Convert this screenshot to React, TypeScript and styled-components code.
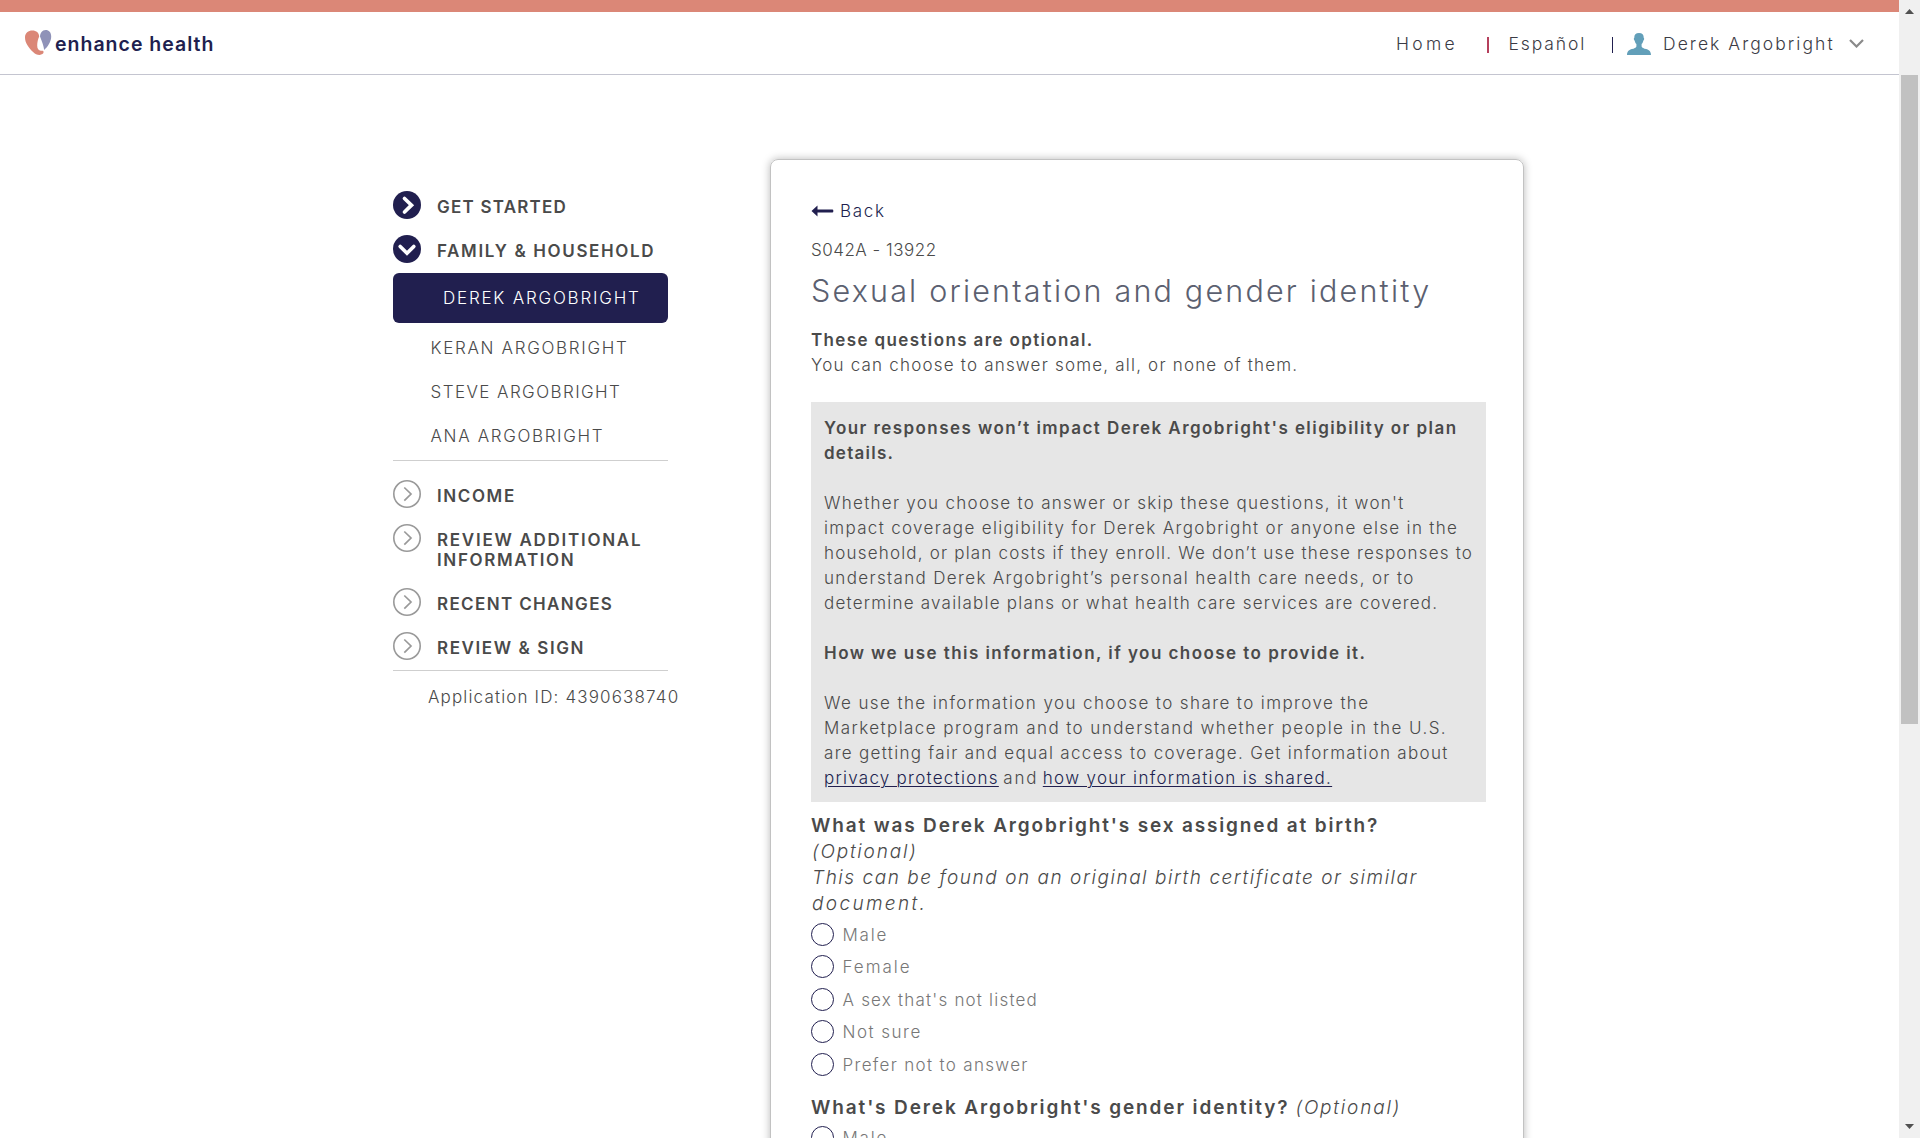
import React from "react";
import styled, { createGlobalStyle } from "styled-components";

const navy = "#211f4f";
const ink = "#4a4a4a";

const GlobalStyle = createGlobalStyle`
  *, *::before, *::after { box-sizing: border-box; }
  html, body { margin: 0; height: 1138px; overflow: hidden; background: #fff; }
  body { font-family: Inter, "Noto Sans", sans-serif; font-weight: 300; font-size: 17px; color: ${ink}; }
`;

const Window = styled.div`
  display: flex;
  height: 1138px;
  overflow: hidden;
`;
const Page = styled.div`
  display: flex;
  flex-direction: column;
  width: 1899px;
`;
const TopBand = styled.div`
  flex: none;
  height: 12px;
  background: #db8777;
`;
const Header = styled.header`
  flex: none;
  display: flex;
  justify-content: space-between;
  height: 63px;
  padding: 0 35px 0 24px;
  border-bottom: 1px solid #c4c5d0;
`;
const Tracked = styled.span<{ $track: number }>`
  letter-spacing: ${(p) => p.$track}px;
  white-space: nowrap;
`;
const Logo = styled.div`
  display: flex;
  gap: 3px;
  height: 63px;
  padding-top: 17px;
`;
const LogoText = styled(Tracked)`
  font-size: 19.5px;
  font-weight: 600;
  line-height: 31px;
  color: ${navy};
`;
const Nav = styled.nav`
  display: flex;
  height: 63px;
  align-items: center;
  font-size: 17.5px;
  color: #3b3b45;
`;
const NavItem = styled(Tracked)<{ $width: number }>`
  width: ${(p) => p.$width}px;
`;
const NavRule = styled.i<{ $color: string; $after: number }>`
  width: 1.5px;
  height: 16px;
  margin: 3px ${(p) => p.$after}px 0 0;
  background: ${(p) => p.$color};
`;
const PersonIcon = styled.svg`
  margin-right: 12px;
`;

const Body = styled.main`
  display: flex;
  align-items: flex-start;
  padding: 84px 0 0 393px;
`;
const Sidebar = styled.aside`
  width: 377px;
  padding-top: 26px;
`;
const Section = styled.div<{ $height?: number }>`
  display: grid;
  grid-template-columns: 28px auto;
  column-gap: 16px;
  align-items: start;
  height: ${(p) => p.$height ?? 44}px;
  padding-top: 6px;
`;
const SectionTitle = styled.div`
  display: flex;
  flex-direction: column;
  padding-top: 6px;
  font-weight: 600;
  line-height: 20px;
`;
const Current = styled.div`
  display: flex;
  align-items: center;
  width: 275px;
  height: 50px;
  margin: 0 0 3px;
  padding-left: 50px;
  border-radius: 6px;
  background: ${navy};
  color: #fff;
`;
const Member = styled.div`
  display: flex;
  align-items: center;
  height: 44px;
  padding-left: 37.5px;
`;
const Divider = styled.div<{ $before?: number; $after: number }>`
  width: 275px;
  height: 1px;
  margin: ${(p) => p.$before ?? 0}px 0 ${(p) => p.$after}px;
  background: #cfcfcf;
`;
const AppId = styled.div`
  padding-left: 35px;
  line-height: 24px;
`;

const Card = styled.section`
  width: 754px;
  height: 1100px;
  padding: 38px 36px 0 40px;
  border: 1px solid #c2c2c2;
  border-radius: 8px;
  box-shadow: 0 0 8px rgba(0, 0, 0, 0.28);
`;
const Back = styled.a`
  display: flex;
  align-items: center;
  gap: 6px;
  height: 25px;
  color: ${navy};
`;
const Code = styled.div`
  margin-top: 15px;
  line-height: 25px;
`;
const Title = styled.h1`
  margin: 8px 0 0;
  font-size: 30.5px;
  font-weight: 300;
  line-height: 40px;
  color: #5b6070;
`;
const Line = styled(Tracked)<{ $bold?: boolean }>`
  display: block;
  line-height: 25px;
  font-weight: ${(p) => (p.$bold ? 600 : 300)};
`;
const Intro = styled.div`
  margin-top: 17px;
`;
const Notice = styled.div`
  width: 675px;
  height: 400px;
  margin: 24px 0 11px;
  padding: 14px 12px 0 13px;
  background: #e6e6e6;
`;
const Paragraph = styled.div`
  margin-bottom: 25px;
`;
const LinkLine = styled.div`
  display: flex;
  gap: 4.5px;
  line-height: 25px;
`;
const TextLink = styled(Tracked)`
  color: ${navy};
  text-decoration: underline;
  text-decoration-thickness: 1px;
  text-underline-offset: 2px;
`;
const Question = styled.div`
  font-size: 19px;
  line-height: 26px;
`;
const Strong = styled(Tracked)`
  font-weight: 600;
`;
const Hint = styled(Tracked)`
  display: block;
  padding-left: 1px;
  font-style: italic;
`;
const InlineHint = styled(Tracked)`
  margin-left: 6px;
  font-style: italic;
`;
const Options = styled.div`
  margin: 1px 0 14px;
`;
const Option = styled.label`
  display: flex;
  align-items: center;
  gap: 8.500px;
  height: 32.5px;
  color: #777;
`;
const OptionText = styled(Tracked)`
  padding-top: 1px;
`;
const Radio = styled.span`
  width: 23px;
  height: 23px;
  border: 1.4px solid ${navy};
  border-radius: 50%;
`;

const Scrollbar = styled.div`
  display: flex;
  flex-direction: column;
  align-items: center;
  width: 21px;
  height: 1138px;
  padding: 9px 0;
  background: #f0f0f0;
`;
const Thumb = styled.div`
  width: 17px;
  height: 649px;
  margin: 61px 0 400px;
  background: #c1c1c1;
`;

function Chevron({ kind }: { kind: "done" | "open" | "todo" }) {
  const filled = kind !== "todo";
  return (
    <svg width="28" height="28" viewBox="0 0 28 28" fill="none">
      <circle cx="14" cy="14" r={filled ? 14 : 13.2} fill={filled ? navy : "none"} stroke={filled ? "none" : "#999"} strokeWidth="1.6" />
      {kind === "done" && <path d="M11.5 7.5 18.5 14.2 11.5 21" stroke="#fff" strokeWidth="3.7" strokeLinecap="round" strokeLinejoin="miter" />}
      {kind === "open" && <path d="M7.2 11.5 14 18.2 20.8 11.5" stroke="#fff" strokeWidth="3.7" strokeLinecap="round" strokeLinejoin="miter" />}
      {kind === "todo" && <path d="M11.3 7.5 18 14 11.3 20.7" stroke="#999" strokeWidth="1.7" />}
    </svg>
  );
}

type TextRow = [string, number];

const members: TextRow[] = [["KERAN ARGOBRIGHT", 1.68], ["STEVE ARGOBRIGHT", 1.42], ["ANA ARGOBRIGHT", 1.64]];
const impact: TextRow[] = [
  ["Whether you choose to answer or skip these questions, it won't", 1.28],
  ["impact coverage eligibility for Derek Argobright or anyone else in the", 1.33],
  ["household, or plan costs if they enroll. We don’t use these responses to", 1.19],
  ["understand Derek Argobright’s personal health care needs, or to", 1.34],
  ["determine available plans or what health care services are covered.", 1.22],
];
const usage: TextRow[] = [
  ["We use the information you choose to share to improve the", 1.4],
  ["Marketplace program and to understand whether people in the U.S.", 1.43],
  ["are getting fair and equal access to coverage. Get information about", 1.31],
];
const sexOptions: TextRow[] = [
  ["Male", 1.8], ["Female", 2.0], ["A sex that's not listed", 1.2], ["Not sure", 1.5], ["Prefer not to answer", 1.32],
];

function Step({ kind, lines, height }: { kind: "done" | "open" | "todo"; lines: TextRow[]; height?: number }) {
  return (
    <Section $height={height}>
      <Chevron kind={kind} />
      <SectionTitle>
        {lines.map(([text, track]) => <Tracked key={text} $track={track}>{text}</Tracked>)}
      </SectionTitle>
    </Section>
  );
}

function RadioGroup({ options }: { options: TextRow[] }) {
  return (
    <Options>
      {options.map(([text, track]) => (
        <Option key={text}><Radio /><OptionText $track={track}>{text}</OptionText></Option>
      ))}
    </Options>
  );
}

export default function App() {
  return (
    <Window>
      <GlobalStyle />
      <Page>
        <TopBand />
        <Header>
          <Logo>
            <svg width="28" height="27" viewBox="0 0 28 27">
              <path d="M1 8.5C1 3.5 4.4 1.4 8.3 1.4c4.1 0 6.7 2.1 6.9 6.1-1.2 2.5-2 5.9-2 9 0 3.4 1.4 5.2 3.6 5.2 1.4 0 2.8-.4 2.8 1.4 0 1.7-1.8 2.8-4 2.8-2.500 0-4.600-1.100-6.800-3.200C4.600 18.600 1 14 1 8.500Z" fill="#db8777" />
              <path d="M16 7.600c.3-3.500 2-6.600 5.700-6.600 3.200 0 5.500 2.300 5.500 6.500 0 5-3.200 10.200-7 13.400-.7-4.500-2.300-8.500-4.200-13.300Z" fill="#8f92b8" />
            </svg>
            <LogoText $track={1}>enhance health</LogoText>
          </Logo>
          <Nav>
            <NavItem $track={3.3} $width={91}>Home</NavItem>
            <NavRule $color="#b5405c" $after={20} />
            <NavItem $track={1.9} $width={103}>Español</NavItem>
            <NavRule $color={navy} $after={14} />
            <PersonIcon width="24" height="22" viewBox="0 0 24 22" fill="#629fb9">
              <path d="M12 0c-3.200 0-4.900 2-4.700 4.800-.8.300-.5 2.500.4 3 .3 1.600.9 2.600 1.700 3.300v2.300c-.5 1.500-2.300 1.900-4.500 2.700C2.200 17 .2 17.900 0 22h24c-.2-4.100-2.200-5-4.900-5.900-2.200-.8-4-1.200-4.500-2.700v-2.300c.8-.7 1.400-1.700 1.700-3.300.9-.5 1.200-2.700.4-3C16.900 2 15.200 0 12 0Z" />
            </PersonIcon>
            <NavItem $track={2.05} $width={186}>Derek Argobright</NavItem>
            <svg width="15" height="9" viewBox="0 0 15 9" fill="none">
              <path d="M1 1 7.500 7.500 14 1" stroke="#8a8a8a" strokeWidth="2.2" />
            </svg>
          </Nav>
        </Header>
        <Body>
          <Sidebar>
            <Step kind="done" lines={[["GET STARTED", 1.22]]} />
            <Step kind="open" lines={[["FAMILY & HOUSEHOLD", 1.63]]} />
            <Current><Tracked $track={1.78}>DEREK ARGOBRIGHT</Tracked></Current>
            {members.map(([text, track]) => <Member key={text}><Tracked $track={track}>{text}</Tracked></Member>)}
            <Divider $before={2} $after={13} />
            <Step kind="todo" lines={[["INCOME", 1.6]]} />
            <Step kind="todo" height={64} lines={[["REVIEW ADDITIONAL", 1.73], ["INFORMATION", 1.65]]} />
            <Step kind="todo" lines={[["RECENT CHANGES", 1.36]]} />
            <Step kind="todo" lines={[["REVIEW & SIGN", 1.6]]} />
            <Divider $after={14} />
            <AppId><Tracked $track={1.15}>Application ID: 4390638740</Tracked></AppId>
          </Sidebar>
          <Card>
            <Back>
              <svg width="23" height="12" viewBox="0 0 23 12" fill={navy}>
                <path d="M.5 6 6.500.500V4.600H21.300a1 1 0 0 1 1 1v.800a1 1 0 0 1-1 1H6.500V11.500Z" />
              </svg>
              <Tracked $track={1.7}>Back</Tracked>
            </Back>
            <Code><Tracked $track={0.5}>S042A - 13922</Tracked></Code>
            <Title><Tracked $track={2.19}>Sexual orientation and gender identity</Tracked></Title>
            <Intro>
              <Line $bold $track={1.37}>These questions are optional.</Line>
              <Line $track={1.2}>You can choose to answer some, all, or none of them.</Line>
            </Intro>
            <Notice>
              <Paragraph>
                <Line $bold $track={1.44}>Your responses won’t impact Derek Argobright's eligibility or plan</Line>
                <Line $bold $track={1.25}>details.</Line>
              </Paragraph>
              <Paragraph>
                {impact.map(([text, track]) => <Line key={text} $track={track}>{text}</Line>)}
              </Paragraph>
              <Paragraph>
                <Line $bold $track={1.45}>How we use this information, if you choose to provide it.</Line>
              </Paragraph>
              {usage.map(([text, track]) => <Line key={text} $track={track}>{text}</Line>)}
              <LinkLine>
                <TextLink $track={1.26}>privacy protections</TextLink>
                <Tracked $track={1.8}>and</Tracked>
                <TextLink $track={1.31}>how your information is shared.</TextLink>
              </LinkLine>
            </Notice>
            <Question>
              <Strong $track={1.85}>What was Derek Argobright's sex assigned at birth?</Strong>
              <Hint $track={1.8}>(Optional)</Hint>
              <Hint $track={1.53}>This can be found on an original birth certificate or similar</Hint>
              <Hint $track={2.35}>document.</Hint>
            </Question>
            <RadioGroup options={sexOptions} />
            <Question>
              <Strong $track={1.88}>What's Derek Argobright's gender identity?</Strong>
              <InlineHint $track={1.8}>(Optional)</InlineHint>
            </Question>
            <RadioGroup options={[["Male", 1.8]]} />
          </Card>
        </Body>
      </Page>
      <Scrollbar>
        <svg width="9" height="5" viewBox="0 0 9 5" fill="#505050"><path d="M4.500 0 9 5H0Z" /></svg>
        <Thumb />
        <svg width="9" height="5" viewBox="0 0 9 5" fill="#505050"><path d="M0 0H9L4.500 5Z" /></svg>
      </Scrollbar>
    </Window>
  );
}
